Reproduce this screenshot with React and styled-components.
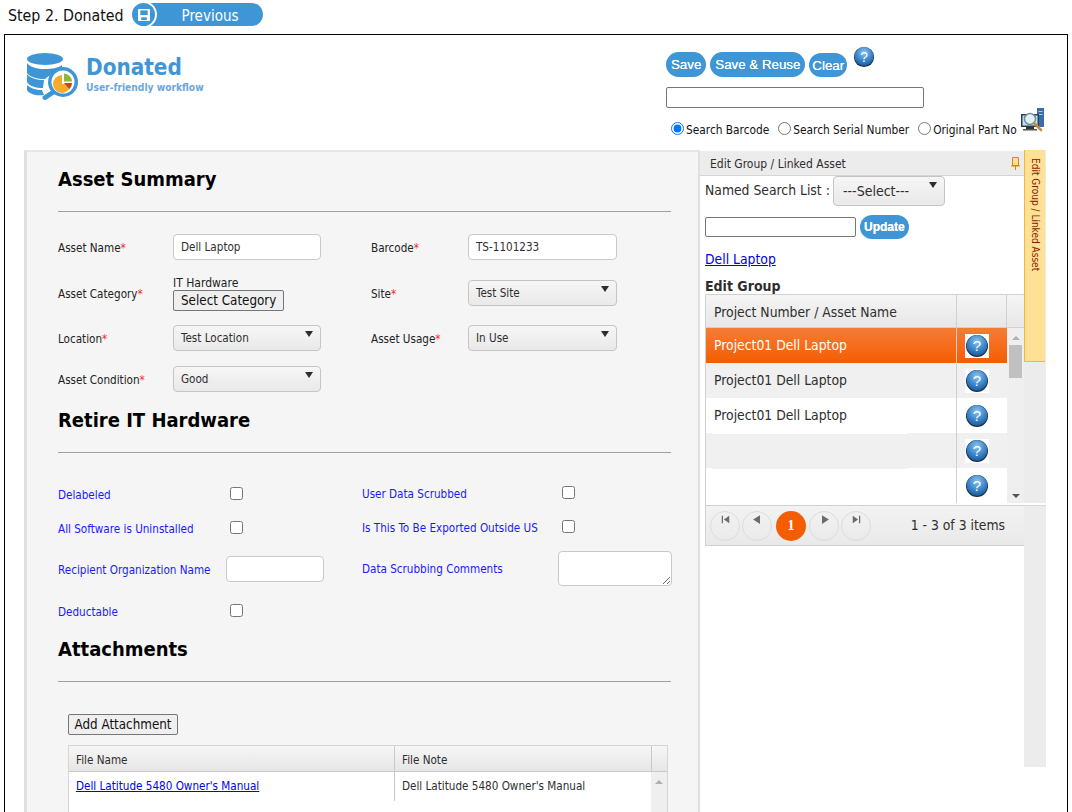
import React from "react";
import styled, { createGlobalStyle } from "styled-components";
import { MdSkipPrevious, MdSkipNext, MdPlayArrow } from "react-icons/md";

const GlobalStyle = createGlobalStyle`
  html, body {
    margin: 0;
    height: 812px;
    overflow: hidden;
    background: #fff;
    font-family: "DejaVu Sans Condensed", Tahoma, "DejaVu Sans", sans-serif;
    font-stretch: condensed;
  }
`;

const TopBar = styled.div`
  height: 34px;
  display: flex;
  align-items: flex-start;
  padding: 3px 0 0 8px;
  box-sizing: border-box;
`;

const StepText = styled.span`
  font-size: 15.8px;
  line-height: 26px;
  width: 122px;
  color: #111;
`;

const RoundIcon = styled.span`
  width: 27px;
  height: 27px;
  margin: -2px -7px 0 0;
  border-radius: 50%;
  background: #3f96d6;
  border: 2px solid #fff;
  box-sizing: border-box;
  display: flex;
  align-items: center;
  justify-content: center;
  position: relative;
  z-index: 1;
`;

const PreviousPill = styled.span`
  width: 113px;
  height: 23px;
  border-radius: 0 12px 12px 0;
  background: #3f96d6;
  color: #fff;
  font-size: 15px;
  line-height: 27px;
  text-align: center;
  padding-left: 7px;
  box-sizing: border-box;
`;

const Frame = styled.div`
  margin: 0 4px;
  border: 1px solid #000;
  height: 900px;
  box-sizing: border-box;
`;

const Header = styled.header`
  display: grid;
  grid-template-columns: 661px 1fr;
  height: 115px;
`;

const Brand = styled.div`
  display: flex;
  padding: 18px 0 0 21px;
  align-items: flex-start;
  gap: 5px;
`;

const BrandTitle = styled.div`
  font-size: 22.3px;
  font-weight: 700;
  line-height: 26px;
  margin-top: 1px;
  color: #3f96d6;
`;

const BrandSub = styled.div`
  font-size: 10.2px;
  font-weight: 700;
  line-height: 14px;
  margin-top: 1px;
  color: #6aa7dd;
`;

const Tools = styled.div`
  padding-top: 12px;
`;

const ButtonRow = styled.div`
  display: flex;
  align-items: flex-start;
  gap: 4px;
`;

const Pill = styled.button`
  height: ${(p) => (p.$small ? 24 : 25)}px;
  margin-top: ${(p) => (p.$small ? 6 : 5)}px;
  padding: 0 ${(p) => (p.$small ? 3 : 5)}px;
  border: none;
  border-radius: 13px;
  background: #3f96d6;
  color: #fff;
  font-family: "Liberation Sans", Arial, sans-serif;
  font-size: 13.3px;
  text-shadow: 0 0 0.6px #fff;
`;

const UpdatePill = styled(Pill)`
  margin: 0 0 0 4px;
  font-size: 12px;
  font-weight: 700;
  padding: 0 4px;
`;

const HelpWrap = styled.span`
  display: inline-flex;
  margin: -1px 0 0 2px;
`;

const SearchInput = styled.input`
  display: block;
  width: 258px;
  height: 21px;
  margin-top: 10px;
  box-sizing: border-box;
  border: 1px solid #767676;
  border-radius: 2px;
  padding: 0 4px;
  background: #fff;
`;

const RadioRow = styled.div`
  display: flex;
  align-items: center;
  margin: 8px 0 0 5px;
  height: 26px;
  font-size: 11.8px;
  color: #111;
`;

const RadioLabel = styled.label`
  display: inline-flex;
  align-items: center;
  margin-right: ${(p) => p.$gap || 9}px;
  input {
    margin: 0 2px 0 0;
    width: 13px;
    height: 13px;
    position: relative;
    top: -1px;
  }
  span {
    padding-top: 2px;
  }
`;

const ScanWrap = styled.span`
  display: inline-flex;
  margin-top: -18px;
`;

const Main = styled.div`
  display: grid;
  grid-template-columns: 676px 324px 22px;
  margin-left: 19px;
  align-items: start;
`;

const LeftPanel = styled.section`
  background: #f5f5f5;
  border-left: 3px solid #e0e0e0;
  border-right: 2px solid #e0e0e0;
  border-top: 2px solid #e6e6e6;
  padding: 15px 27px 0 31px;
  height: 800px;
  box-sizing: border-box;
`;

const Heading = styled.h2`
  margin: ${(p) => p.$top || 0}px 0 20px;
  font-family: "DejaVu Sans Condensed", Tahoma, sans-serif;
  font-size: 20px;
  line-height: 24px;
  font-weight: 700;
  color: #000;
`;

const Rule = styled.hr`
  margin: 0;
  border: none;
  border-top: 1px solid #a0a0a0;
`;

const SummaryGrid = styled.div`
  display: grid;
  grid-template-columns: 115px 148px 50px 97px 149px;
  grid-template-rows: 46px 46px 44px 38px;
  align-items: center;
  margin-top: 12px;
`;

const FieldLabel = styled.label`
  font-size: 11.6px;
  color: #222;
  padding-top: 2px;
  b {
    font-weight: 400;
    color: #ff2a2a;
  }
`;

const TextBox = styled.input`
  box-sizing: border-box;
  width: ${(p) => p.$w || 148}px;
  height: 26px;
  border: 1px solid #c9c9c9;
  border-radius: 4px;
  background: #fff;
  padding: 0 7px;
  font: inherit;
  font-size: 11.6px;
  color: #2e2e2e;
`;

const Dropdown = styled.div`
  position: relative;
  box-sizing: border-box;
  width: ${(p) => p.$w || 148}px;
  height: ${(p) => p.$h || 26}px;
  line-height: ${(p) => (p.$h || 26) - 2}px;
  border: 1px solid #c5c5c5;
  border-radius: 4px;
  background: linear-gradient(#f6f6f6, #e9e9e9);
  padding-left: ${(p) => p.$pad || 7}px;
  font-size: ${(p) => p.$size || 11.6}px;
  color: #2e2e2e;
  &::after {
    content: "";
    position: absolute;
    top: 5px;
    right: 7px;
    border-left: 4px solid transparent;
    border-right: 4px solid transparent;
    border-top: 6px solid #2e2e2e;
  }
`;

const CategoryCell = styled.div`
  font-size: 12px;
  line-height: 14px;
  color: #222;
`;

const NativeButton = styled.button`
  display: block;
  height: 21px;
  padding: 0 ${(p) => p.$pad || 7}px;
  border: 1px solid #767676;
  border-radius: 2px;
  background: #efefef;
  color: #111;
  font-family: "DejaVu Sans Condensed", Tahoma, sans-serif;
  font-size: 13.3px;
`;

const RetireGrid = styled.div`
  display: grid;
  grid-template-columns: 168px 98px 38px 196px 114px;
  grid-template-rows: 34px 34px 48px 36px;
  align-items: center;
  margin-top: 24px;
`;

const BlueLabel = styled.span`
  font-size: 11.6px;
  color: #1a1aff;
  padding-top: 2px;
  margin-bottom: ${(p) => (p.$up ? 2 : 0)}px;
`;

const Check = styled.input.attrs({ type: "checkbox" })`
  width: 13px;
  height: 13px;
  margin: 0 0 ${(p) => (p.$up ? 4 : 2)}px 4px;
`;

const NoteBox = styled.textarea`
  box-sizing: border-box;
  width: 114px;
  height: 35px;
  border: 1px solid #c9c9c9;
  border-radius: 4px;
  background: #fff;
  margin-bottom: 1px;
  display: block;
`;

const AttachArea = styled.div`
  padding: 32px 0 0 10px;
`;

const AttachTable = styled.div`
  width: 600px;
  margin-top: 10px;
  border: 1px solid #d5d5d5;
  border-bottom: none;
  box-sizing: border-box;
`;

const AttachHead = styled.div`
  display: grid;
  grid-template-columns: 325px 257px 1fr;
  height: 25px;
  background: linear-gradient(#f6f6f6, #e6e6e6);
  border-bottom: 1px solid #c9c9c9;
`;

const AttachHeadCell = styled.div`
  font-size: 11.6px;
  line-height: 28px;
  padding-left: 7px;
  color: #2e2e2e;
  border-left: ${(p) => (p.$line ? "1px solid #c9c9c9" : "none")};
`;

const AttachRow = styled.div`
  display: grid;
  grid-template-columns: 325px 257px 1fr;
  height: 40px;
  background: #fff;
`;

const AttachCell = styled.div`
  font-size: 11.6px;
  line-height: 29px;
  padding-left: 7px;
  color: #2e2e2e;
  height: 29px;
  border-left: ${(p) => (p.$line ? "1px solid #c9c9c9" : "none")};
  a {
    color: #0000ee;
  }
`;

const AttachScroll = styled.div`
  background: #efefef;
  display: flex;
  justify-content: center;
  padding-top: 8px;
`;

const UpArrow = styled.span`
  display: block;
  width: 0;
  height: 0;
  border-left: 4px solid transparent;
  border-right: 4px solid transparent;
  border-bottom: 4px solid #b0b0b0;
`;

const DownArrow = styled.span`
  display: block;
  width: 0;
  height: 0;
  border-left: 4px solid transparent;
  border-right: 4px solid transparent;
  border-top: 4px solid #555;
`;

const RightPanel = styled.section`
  padding-top: 1px;
`;

const PanelTitle = styled.div`
  height: 25px;
  background: #ececec;
  border-bottom: 1px solid #d5d5d5;
  box-sizing: border-box;
  display: flex;
  align-items: center;
  justify-content: space-between;
  padding: 1px 4px 0 10px;
  font-size: 12px;
  color: #2e2e2e;
`;

const PanelBody = styled.div`
  padding-left: 5px;
`;

const NamedRow = styled.div`
  display: flex;
  align-items: flex-start;
  height: 39px;
  font-size: 13.8px;
  color: #2e2e2e;
  span {
    width: 128px;
    line-height: 28px;
  }
`;

const UpdateRow = styled.div`
  display: flex;
  align-items: center;
  height: 24px;
`;

const GroupInput = styled.input`
  box-sizing: border-box;
  width: 151px;
  height: 20px;
  border: 1px solid #767676;
  border-radius: 2px;
  background: #fff;
`;

const GroupLink = styled.a`
  display: block;
  margin-top: 11px;
  font-size: 13.8px;
  line-height: 18px;
  color: #0000ee;
  text-decoration: underline;
`;

const GroupTitle = styled.div`
  margin-top: 10px;
  font-size: 14px;
  font-weight: 700;
  line-height: 16px;
  color: #2e2e2e;
`;

const GridWrap = styled.div`
  width: 319px;
  border-left: 1px solid #d0d0d0;
  box-sizing: border-box;
`;

const GridHead = styled.div`
  display: grid;
  grid-template-columns: 251px 50px 1fr;
  height: 34px;
  background: linear-gradient(#f5f5f5, #e7e7e7);
  border-top: 1px solid #d0d0d0;
  border-bottom: 1px solid #d0d0d0;
  box-sizing: border-box;
  font-size: 13.8px;
  line-height: 34px;
  color: #2e2e2e;
  div {
    border-right: 1px solid #d0d0d0;
  }
  div:first-child {
    padding-left: 8px;
  }
`;

const GridBody = styled.div`
  display: grid;
  grid-template-columns: 1fr 17px;
  height: 175px;
  border-right: 1px solid #d0d0d0;
`;

const Row = styled.div`
  display: grid;
  grid-template-columns: 251px 50px;
  height: 35px;
  background: ${(p) =>
    p.$active
      ? "linear-gradient(#f57c36, #f55d02)"
      : p.$alt
      ? "#f0f0f0"
      : "#fff"};
  color: ${(p) => (p.$active ? "#fff" : "#2e2e2e")};
  font-size: 13.8px;
  line-height: 34px;
`;

const NameCell = styled.div`
  padding-left: 8px;
  border-right: 1px solid #d0d0d0;
`;

const BlankMark = styled.div`
  width: 195px;
  height: 1px;
  margin-left: -2px;
  background: ${(p) => (p.$alt ? "#fff" : "#f0f0f0")};
`;

const IconCell = styled.div`
  display: flex;
  align-items: center;
  justify-content: center;
  padding-right: 11px;
`;

const IconTile = styled.span`
  display: flex;
  align-items: center;
  justify-content: center;
  width: 24px;
  height: 24px;
  background: #fff;
`;

const ScrollTrack = styled.div`
  background: #efefef;
  display: flex;
  flex-direction: column;
  align-items: center;
  padding-top: 8px;
  box-sizing: border-box;
  position: relative;
`;

const ScrollThumb = styled.div`
  width: 13px;
  height: 33px;
  margin-top: 5px;
  background: #c0c0c0;
`;

const ScrollEnd = styled.div`
  position: absolute;
  bottom: 5px;
`;

const Pager = styled.div`
  display: flex;
  align-items: center;
  height: 41px;
  margin-top: 2px;
  border-top: 1px solid #d0d0d0;
  border-bottom: 1px solid #d0d0d0;
  background: linear-gradient(#f3f3f3, #e9e9e9);
  box-sizing: border-box;
  padding-left: 4px;
`;

const PageBtn = styled.span`
  width: 30px;
  height: 30px;
  box-sizing: border-box;
  margin-right: ${(p) => p.$gap || 2}px;
  border-radius: 50%;
  border: ${(p) => (p.$on ? "none" : "1px solid #dcdcdc")};
  background: ${(p) => (p.$on ? "#f55d02" : "transparent")};
  color: ${(p) => (p.$on ? "#fff" : "#6b6b6b")};
  font-family: "Liberation Serif", serif;
  font-weight: 700;
  font-size: 14px;
  display: flex;
  align-items: ${(p) => (p.$on ? "center" : "flex-start")};
  justify-content: center;
`;

const PagerInfo = styled.span`
  margin-left: auto;
  padding: 0 19px 1px 0;
  font-size: 13.8px;
  color: #2e2e2e;
`;

const SideStrip = styled.aside`
  position: relative;
  height: 617px;
  background: #ececec;
  &::after {
    content: "";
    position: absolute;
    top: 353px;
    left: 0;
    right: 0;
    height: 2px;
    background: #fff;
    border-bottom: 1px solid #d8d8d8;
  }
`;

const SideTab = styled.div`
  height: 212px;
  box-sizing: border-box;
  background: #ffe196;
  border-left: 1px solid #f5b53f;
  border-bottom: 1px solid #f5b53f;
  writing-mode: vertical-rl;
  font-size: 10px;
  line-height: 20px;
  padding-top: 8px;
  color: #8a1c00;
`;

const HelpIcon = ({ size = 22 }) => (
  <svg width={size} height={size} viewBox="0 0 24 24">
    <defs>
      <radialGradient id="helpFill" cx="50%" cy="30%" r="70%">
        <stop offset="0%" stopColor="#8cc4ef" />
        <stop offset="60%" stopColor="#3a86ca" />
        <stop offset="100%" stopColor="#1b5a9a" />
      </radialGradient>
    </defs>
    <circle cx="12" cy="12" r="11" fill="#1c2c3c" />
    <circle cx="12" cy="11.5" r="10.400" fill="url(#helpFill)" />
    <text x="12" y="17" textAnchor="middle" fontSize="15" fontFamily="Liberation Sans" fill="#fff">?</text>
  </svg>
);

const Logo = () => (
  <svg width="55" height="47" viewBox="0 0 55 47">
    <g fill="#3f96d6">
      <ellipse cx="19" cy="6" rx="18" ry="6" />
      <path d="M1 10c3 4 10 6 18 6 7 0 13-1 17-4v6c-9 2-15 6-17 8-8 0-15-2-18-6z" />
      <path d="M1 21c3 4 10 6 17 6l-1 8c-7 0-14-2-16-6z" />
      <path d="M1 32c3 3 9 5 15 5l2 5c-8 1-15-1-17-5z" />
      <circle cx="37" cy="29" r="15" />
      <path d="M26 37l3.5 3.5-9 6a2.5 2.5 0 0 1-3.5-3.5z" />
    </g>
    <circle cx="37" cy="29" r="11.5" fill="#fff" />
    <path d="M36 22a9 9 0 1 0 9 9h-9z" fill="#f5ab2b" />
    <path d="M38 20.500a8.500 8.500 0 0 1 8 8h-8z" fill="#8cb63c" />
    <path d="M38 30h8a8.500 8.500 0 0 1-2.500 6z" fill="#c8401c" />
  </svg>
);

const FloppyIcon = () => (
  <svg width="12" height="12" viewBox="0 0 13 13">
    <path d="M0 1a1 1 0 0 1 1-1h11a1 1 0 0 1 1 1v11a1 1 0 0 1-1 1H1a1 1 0 0 1-1-1z" fill="#fff" />
    <rect x="2.500" y="1.500" width="8" height="5" fill="#3f96d6" />
    <rect x="3.500" y="9" width="6" height="3" fill="#3f96d6" />
  </svg>
);

const ScanIcon = () => (
  <svg width="25" height="25" viewBox="0 0 25 25">
    <rect x="17" y="0" width="7" height="19" fill="#3b6ea8" />
    <rect x="18.500" y="3" width="4" height="1" fill="#a8cbe8" />
    <rect x="18.500" y="6" width="4" height="1" fill="#a8cbe8" />
    <rect x="1" y="6" width="18" height="13" fill="#2c3e50" />
    <rect x="2.500" y="7.500" width="15" height="10" fill="#bfe3f7" />
    <rect x="6" y="19" width="8" height="2" fill="#333" />
    <rect x="3" y="21" width="14" height="1.500" fill="#555" />
    <circle cx="10" cy="11" r="5.500" fill="#dff2fb" stroke="#7a8c99" strokeWidth="1.500" />
    <path d="M14 15l7 7" stroke="#c98b3a" strokeWidth="2.500" strokeLinecap="round" />
  </svg>
);

const PinIcon = () => (
  <svg width="9" height="13" viewBox="0 0 9 13">
    <path d="M1.500.5h6v8h-6z" fill="#ffe196" stroke="#d08a00" />
    <path d="M0 9h9M4.500 9v4" stroke="#d08a00" />
  </svg>
);

const Req = ({ children }) => (
  <FieldLabel>
    {children}
    <b>*</b>
  </FieldLabel>
);

const rows = [
  { name: "Project01 Dell Laptop", active: true, tile: true },
  { name: "Project01 Dell Laptop", alt: true, tile: true },
  { name: "Project01 Dell Laptop" },
  { name: "", alt: true, tile: true },
  { name: "" },
];

export default function App() {
  return (
    <>
      <GlobalStyle />
      <TopBar>
        <StepText>Step 2. Donated</StepText>
        <RoundIcon>
          <FloppyIcon />
        </RoundIcon>
        <PreviousPill>Previous</PreviousPill>
      </TopBar>
      <Frame>
        <Header>
          <Brand>
            <Logo />
            <div>
              <BrandTitle>Donated</BrandTitle>
              <BrandSub>User-friendly workflow</BrandSub>
            </div>
          </Brand>
          <Tools>
            <ButtonRow>
              <Pill>Save</Pill>
              <Pill>Save &amp; Reuse</Pill>
              <Pill $small>Clear</Pill>
              <HelpWrap>
                <HelpIcon />
              </HelpWrap>
            </ButtonRow>
            <SearchInput />
            <RadioRow>
              <RadioLabel>
                <input type="radio" name="searchBy" defaultChecked />
                <span>Search Barcode</span>
              </RadioLabel>
              <RadioLabel>
                <input type="radio" name="searchBy" />
                <span>Search Serial Number</span>
              </RadioLabel>
              <RadioLabel $gap={3}>
                <input type="radio" name="searchBy" />
                <span>Original Part No</span>
              </RadioLabel>
              <ScanWrap>
                <ScanIcon />
              </ScanWrap>
            </RadioRow>
          </Tools>
        </Header>
        <Main>
          <LeftPanel>
            <Heading>Asset Summary</Heading>
            <Rule />
            <SummaryGrid>
              <Req>Asset Name</Req>
              <TextBox defaultValue="Dell Laptop" />
              <span />
              <Req>Barcode</Req>
              <TextBox $w={149} defaultValue="TS-1101233" />

              <Req>Asset Category</Req>
              <CategoryCell>
                IT Hardware
                <NativeButton>Select Category</NativeButton>
              </CategoryCell>
              <span />
              <Req>Site</Req>
              <Dropdown $w={149}>Test Site</Dropdown>

              <Req>Location</Req>
              <Dropdown>Test Location</Dropdown>
              <span />
              <Req>Asset Usage</Req>
              <Dropdown $w={149}>In Use</Dropdown>

              <Req>Asset Condition</Req>
              <Dropdown>Good</Dropdown>
            </SummaryGrid>

            <Heading $top={10}>Retire IT Hardware</Heading>
            <Rule />
            <RetireGrid>
              <BlueLabel>Delabeled</BlueLabel>
              <Check />
              <span />
              <BlueLabel $up>User Data Scrubbed</BlueLabel>
              <Check $up />

              <BlueLabel>All Software is Uninstalled</BlueLabel>
              <Check />
              <span />
              <BlueLabel $up>Is This To Be Exported Outside US</BlueLabel>
              <Check $up />

              <BlueLabel>Recipient Organization Name</BlueLabel>
              <TextBox $w={98} />
              <span />
              <BlueLabel $up>Data Scrubbing Comments</BlueLabel>
              <NoteBox />

              <BlueLabel>Deductable</BlueLabel>
              <Check />
            </RetireGrid>

            <Heading $top={8}>Attachments</Heading>
            <Rule />
            <AttachArea>
              <NativeButton $pad={5.5}>Add Attachment</NativeButton>
              <AttachTable>
                <AttachHead>
                  <AttachHeadCell>File Name</AttachHeadCell>
                  <AttachHeadCell $line>File Note</AttachHeadCell>
                  <AttachHeadCell $line />
                </AttachHead>
                <AttachRow>
                  <AttachCell>
                    <a href="#manual">Dell Latitude 5480 Owner's Manual</a>
                  </AttachCell>
                  <AttachCell $line>Dell Latitude 5480 Owner's Manual</AttachCell>
                  <AttachScroll>
                    <UpArrow />
                  </AttachScroll>
                </AttachRow>
              </AttachTable>
            </AttachArea>
          </LeftPanel>

          <RightPanel>
            <PanelTitle>
              Edit Group / Linked Asset
              <PinIcon />
            </PanelTitle>
            <PanelBody>
              <NamedRow>
                <span>Named Search List :</span>
                <Dropdown $w={112} $h={30} $pad={9} $size={14}>
                  ---Select---
                </Dropdown>
              </NamedRow>
              <UpdateRow>
                <GroupInput />
                <UpdatePill $small>Update</UpdatePill>
              </UpdateRow>
              <GroupLink href="#laptop">Dell Laptop</GroupLink>
              <GroupTitle>Edit Group</GroupTitle>
              <GridWrap>
                <GridHead>
                  <div>Project Number / Asset Name</div>
                  <div />
                  <span />
                </GridHead>
                <GridBody>
                  <div>
                    {rows.map((r, i) => (
                      <Row key={i} $active={r.active} $alt={r.alt}>
                        <NameCell>
                          {r.name || <BlankMark $alt={r.alt} />}
                        </NameCell>
                        <IconCell>
                          {r.tile ? (
                            <IconTile>
                              <HelpIcon size={24} />
                            </IconTile>
                          ) : (
                            <HelpIcon size={24} />
                          )}
                        </IconCell>
                      </Row>
                    ))}
                  </div>
                  <ScrollTrack>
                    <UpArrow />
                    <ScrollThumb />
                    <ScrollEnd>
                      <DownArrow />
                    </ScrollEnd>
                  </ScrollTrack>
                </GridBody>
                <Pager>
                  <PageBtn><MdSkipPrevious size={15} /></PageBtn>
                  <PageBtn $gap={4}><MdPlayArrow size={15} style={{ transform: "scaleX(-1)" }} /></PageBtn>
                  <PageBtn $on $gap={3}>1</PageBtn>
                  <PageBtn><MdPlayArrow size={15} /></PageBtn>
                  <PageBtn><MdSkipNext size={15} /></PageBtn>
                  <PagerInfo>1 - 3 of 3 items</PagerInfo>
                </Pager>
              </GridWrap>
            </PanelBody>
          </RightPanel>

          <SideStrip>
            <SideTab>Edit Group / Linked Asset</SideTab>
          </SideStrip>
        </Main>
      </Frame>
    </>
  );
}
